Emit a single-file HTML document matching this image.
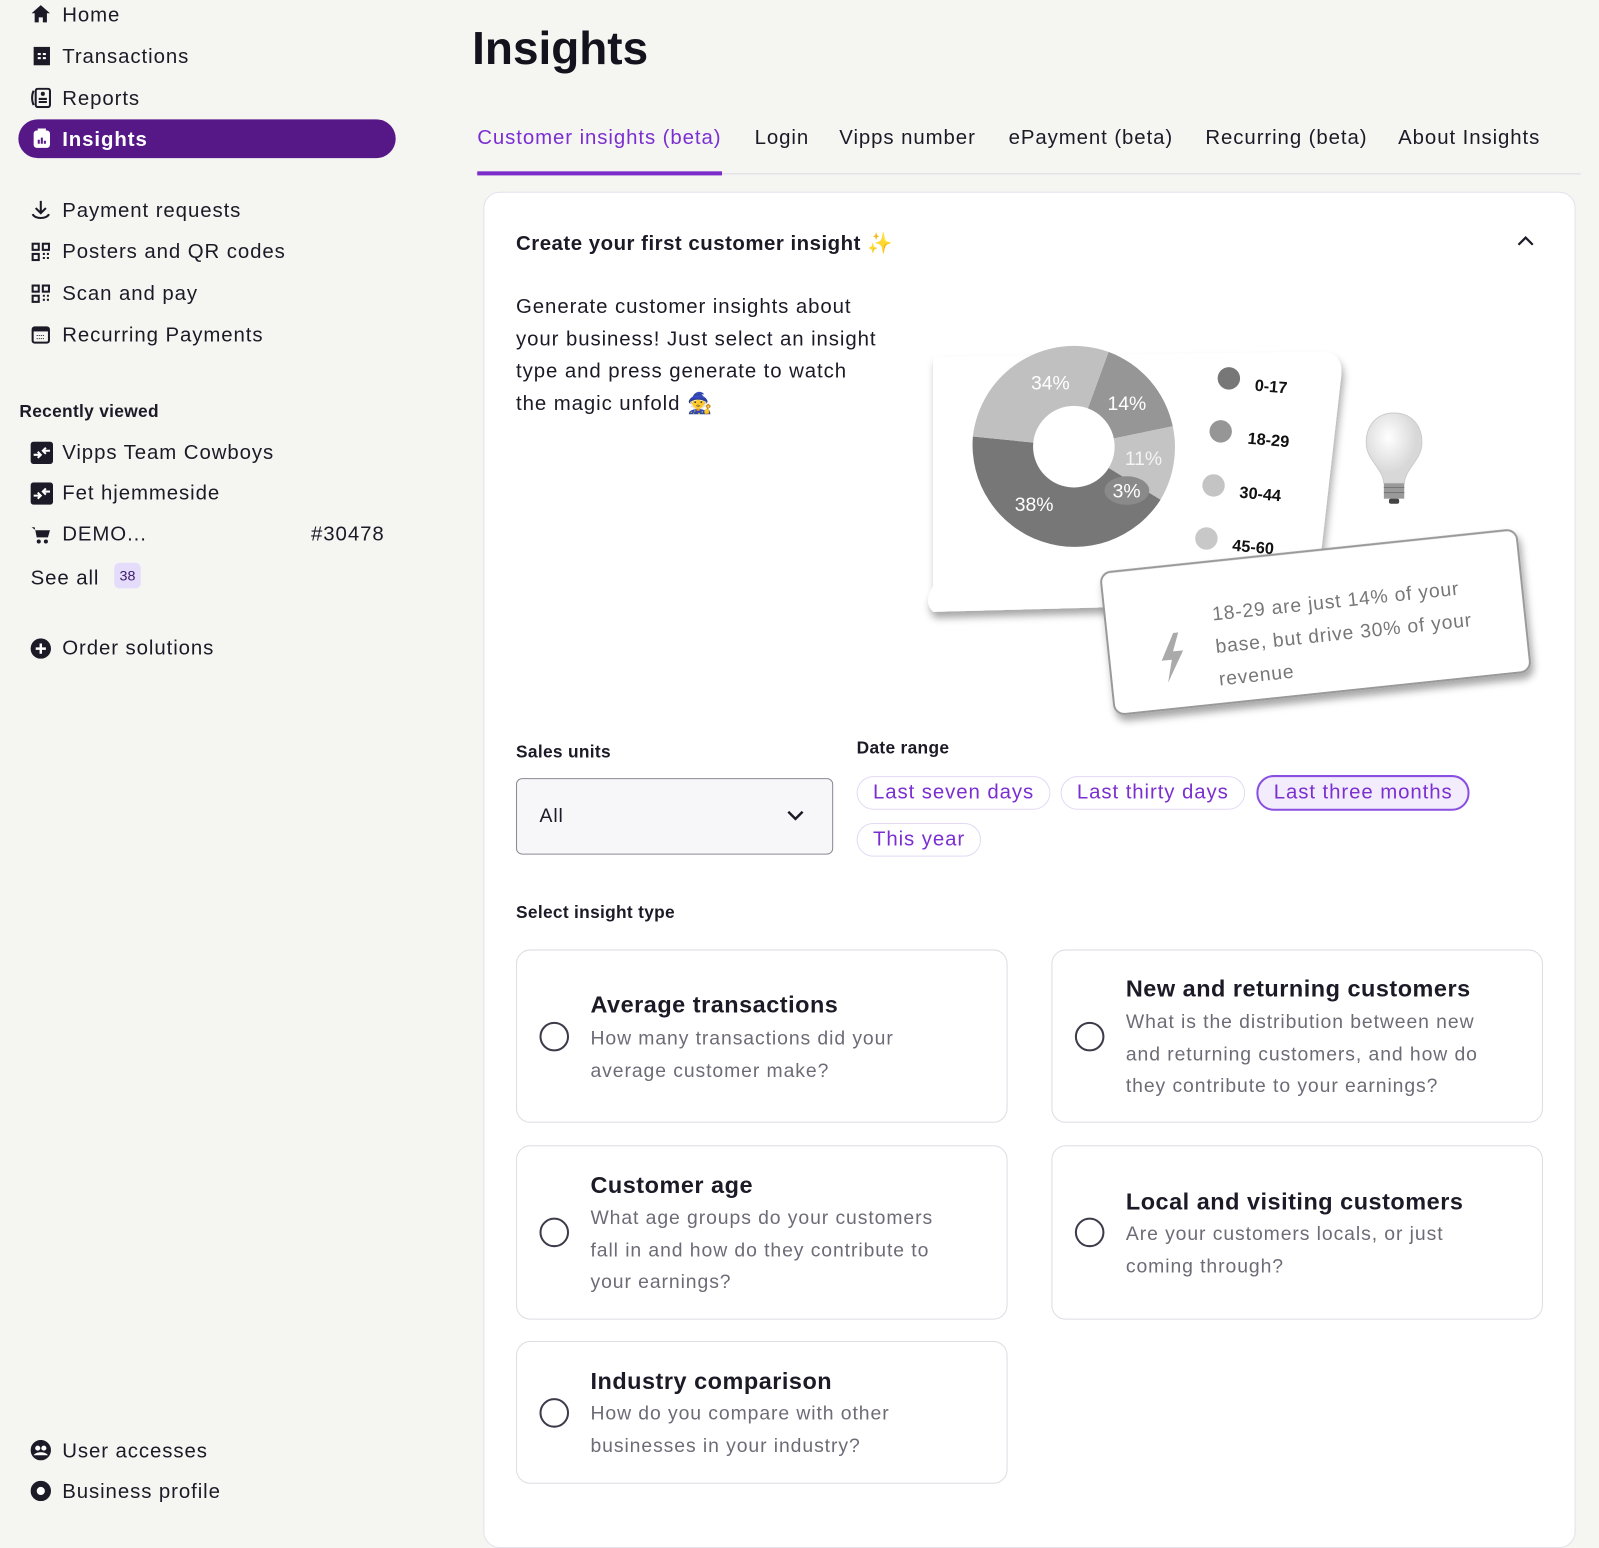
<!DOCTYPE html>
<html><head><meta charset="utf-8">
<style>
*{box-sizing:border-box;margin:0;padding:0}
html,body{width:1599px;height:1499px;overflow:hidden}
body{background:#f5f5f2;font-family:"Liberation Sans",sans-serif;color:#1b1a26}
#w{position:absolute;left:0;top:0;width:1568px;height:1470px;transform:scale(1.0198);transform-origin:0 0;letter-spacing:0.9px}
.a{position:absolute;white-space:nowrap}
.nav{font-size:20px;line-height:24px}
.ic{position:absolute;width:20px;height:20px}
.pill{position:absolute;left:18px;top:117px;width:370px;height:38px;border-radius:19px;background:#561787}
.tab{font-size:20px;top:124px}
.card{position:absolute;left:474px;top:188px;width:1071px;height:1330px;background:#fff;border:1px solid #e4e2ea;border-radius:16px}
.chip{position:absolute;height:33px;border:1px solid #e3d9f5;border-radius:17px;color:#7b2fd0;font-size:20px;line-height:31px;padding:0 15px}
.opt{position:absolute;width:482px;border:1px solid #dedde3;border-radius:14px;background:#fff}
.radio{position:absolute;left:22px;width:29px;height:29px;border:2px solid #3d3b4a;border-radius:50%}
.ot{position:absolute;left:72px;font-size:23px;font-weight:bold;color:#1b1a26;letter-spacing:0.5px}
.od{position:absolute;left:72px;font-size:19px;line-height:31.5px;color:#6d6b76;white-space:normal}
</style></head><body><div id="w">
<svg class="ic" style="left:30px;top:4px" viewBox="0 0 20 20"><path d="M10 1L1 9h3v9h4v-5h4v5h4V9h3z" fill="#1b1a26"/></svg>
<div class="a nav" style="left:61px;top:3px">Home</div>
<svg class="ic" style="left:32px;top:45px" viewBox="0 0 20 20"><rect x="1" y="1" width="16" height="18" fill="#1b1a26"/><rect x="5" y="7" width="3" height="2" fill="#fff"/><rect x="10" y="7" width="3" height="2" fill="#fff"/><rect x="5" y="11" width="3" height="2" fill="#fff"/><rect x="10" y="11" width="3" height="2" fill="#fff"/></svg>
<div class="a nav" style="left:61px;top:44px">Transactions</div>
<svg class="ic" style="left:30px;top:86px" viewBox="0 0 20 20"><rect x="5" y="1" width="14" height="18" rx="2" fill="none" stroke="#1b1a26" stroke-width="2"/><path d="M3 3C1 7 1 13 3 17" fill="none" stroke="#1b1a26" stroke-width="2"/><circle cx="12" cy="6" r="2" fill="#1b1a26"/><path d="M8 11h8M8 14h8" stroke="#1b1a26" stroke-width="2"/></svg>
<div class="a nav" style="left:61px;top:85px">Reports</div>
<div class="pill"></div>
<svg class="ic" style="left:31px;top:126px" viewBox="0 0 20 20"><rect x="2" y="2" width="16" height="17" rx="3" fill="#fff"/><rect x="6" y="0" width="8" height="4" fill="#fff"/><path d="M7 15v-4M10 15v-6M13 15v-3" stroke="#561787" stroke-width="2"/></svg>
<div class="a nav" style="left:61px;top:125px;color:#fff;font-weight:bold">Insights</div>
<svg class="ic" style="left:30px;top:196px" viewBox="0 0 20 20"><path d="M10 1v12M5 8l5 5 5-5M2 14c2 5 14 5 16 0" fill="none" stroke="#1b1a26" stroke-width="2"/></svg>
<div class="a nav" style="left:61px;top:195px">Payment requests</div>
<svg class="ic" style="left:30px;top:237px" viewBox="0 0 20 20"><rect x="2" y="2" width="6" height="6" fill="none" stroke="#1b1a26" stroke-width="2"/><rect x="12" y="2" width="6" height="6" fill="none" stroke="#1b1a26" stroke-width="2"/><rect x="2" y="12" width="6" height="6" fill="none" stroke="#1b1a26" stroke-width="2"/><path d="M12 12h2M16 12h2M12 16h2M16 16h2" stroke="#1b1a26" stroke-width="2"/></svg>
<div class="a nav" style="left:61px;top:235px">Posters and QR codes</div>
<svg class="ic" style="left:30px;top:278px" viewBox="0 0 20 20"><rect x="2" y="2" width="6" height="6" fill="none" stroke="#1b1a26" stroke-width="2"/><rect x="12" y="2" width="6" height="6" fill="none" stroke="#1b1a26" stroke-width="2"/><rect x="2" y="12" width="6" height="6" fill="none" stroke="#1b1a26" stroke-width="2"/><path d="M12 12h2M16 12h2M12 16h2M16 16h2" stroke="#1b1a26" stroke-width="2"/></svg>
<div class="a nav" style="left:61px;top:276px">Scan and pay</div>
<svg class="ic" style="left:30px;top:318px" viewBox="0 0 20 20"><rect x="2" y="3" width="16" height="15" rx="2" fill="none" stroke="#1b1a26" stroke-width="2"/><rect x="2" y="3" width="16" height="4" fill="#1b1a26"/><path d="M6 11h8M6 14h8" stroke="#1b1a26" stroke-width="1" stroke-dasharray="1 1"/></svg>
<div class="a nav" style="left:61px;top:317px">Recurring Payments</div>
<div class="a" style="left:19px;top:394px;font-size:17px;font-weight:bold;letter-spacing:0.3px">Recently viewed</div>
<svg class="ic" style="left:30px;top:433px;width:22px;height:22px" viewBox="0 0 22 22"><rect width="22" height="22" rx="3" fill="#1b1a26"/><path d="M3 13h6M7 10l3 3-3 3M19 9h-6M15 6l-3 3 3 3" fill="none" stroke="#fff" stroke-width="2"/></svg>
<div class="a nav" style="left:61px;top:432px">Vipps Team Cowboys</div>
<svg class="ic" style="left:30px;top:473px;width:22px;height:22px" viewBox="0 0 22 22"><rect width="22" height="22" rx="3" fill="#1b1a26"/><path d="M3 13h6M7 10l3 3-3 3M19 9h-6M15 6l-3 3 3 3" fill="none" stroke="#fff" stroke-width="2"/></svg>
<div class="a nav" style="left:61px;top:472px">Fet hjemmeside</div>
<svg class="ic" style="left:30px;top:515px" viewBox="0 0 20 20"><path d="M1 2h3l2 10h11l2-7H5" fill="#1b1a26"/><circle cx="8" cy="16" r="2" fill="#1b1a26"/><circle cx="15" cy="16" r="2" fill="#1b1a26"/></svg>
<div class="a nav" style="left:61px;top:512px">DEMO...</div>
<div class="a nav" style="left:305px;top:512px">#30478</div>
<div class="a nav" style="left:30px;top:555px">See all</div>
<div class="a" style="left:112px;top:552px;width:26px;height:25px;background:#e5dcfb;border-radius:5px;font-size:14px;line-height:25px;text-align:center;color:#3b1a6b;letter-spacing:0">38</div>
<svg class="ic" style="left:30px;top:626px" viewBox="0 0 20 20"><circle cx="10" cy="10" r="10" fill="#1b1a26"/><path d="M10 5v10M5 10h10" stroke="#fff" stroke-width="2.4"/></svg>
<div class="a nav" style="left:61px;top:624px">Order solutions</div>
<svg class="ic" style="left:30px;top:1412px" viewBox="0 0 20 20"><circle cx="10" cy="10" r="10" fill="#1b1a26"/><circle cx="7" cy="8" r="2.5" fill="#fff"/><circle cx="13" cy="8" r="2.5" fill="#fff"/><path d="M3 15c2-4 12-4 14 0" fill="#fff"/></svg>
<div class="a nav" style="left:61px;top:1411px">User accesses</div>
<svg class="ic" style="left:30px;top:1452px" viewBox="0 0 20 20"><circle cx="10" cy="10" r="10" fill="#1b1a26"/><circle cx="10" cy="10" r="4" fill="#fff"/></svg>
<div class="a nav" style="left:61px;top:1451px">Business profile</div>

<div class="a" style="left:463px;top:22px;font-size:45px;font-weight:bold;color:#14121c;letter-spacing:0">Insights</div>
<div class="a tab" style="left:468px;color:#7b2fd0">Customer insights (beta)</div>
<div class="a tab" style="left:740px">Login</div>
<div class="a tab" style="left:823px">Vipps number</div>
<div class="a tab" style="left:989px">ePayment (beta)</div>
<div class="a tab" style="left:1182px">Recurring (beta)</div>
<div class="a tab" style="left:1371px">About Insights</div>
<div class="a" style="left:467px;top:170px;width:1083px;height:1px;background:#dcd9e3"></div>
<div class="a" style="left:468px;top:168px;width:240px;height:4px;background:#7b2cc9"></div>

<div class="card"></div>
<div class="a" style="left:506px;top:226px;font-size:20px;font-weight:bold;letter-spacing:0.5px">Create your first customer insight <span style="color:#f5a623">✨</span></div>
<svg class="a" style="left:1486px;top:226px" width="20" height="20" viewBox="0 0 20 20"><path d="M3 14l7-7 7 7" fill="none" stroke="#1b1a26" stroke-width="2.2"/></svg>
<div class="a" style="left:506px;top:286px;font-size:20px;line-height:31.5px;white-space:normal;width:360px">Generate customer insights about your business! Just select an insight type and press generate to watch the magic unfold 🧙</div>

<svg class="a" style="left:900px;top:330px;letter-spacing:0" width="620" height="400" viewBox="900 330 620 400">
<defs><filter id="sh" x="-20%" y="-20%" width="140%" height="150%"><feDropShadow dx="2" dy="6" stdDeviation="4" flood-color="#000" flood-opacity="0.35"/></filter>
<radialGradient id="bg" cx="0.4" cy="0.35"><stop offset="0" stop-color="#fff"/><stop offset="1" stop-color="#d8d8d8"/></radialGradient></defs>
<path d="M915 350 L1300 345 Q1318 348 1315 370 L1290 590 L915 600 Q905 590 915 575Z" fill="#fff" filter="url(#sh)"/>
<g transform="translate(1053,438)">
<path d="M0 0 L34 -93 A100 100 0 0 1 97 -20Z" fill="#969696"/>
<path d="M0 0 L97 -20 A100 100 0 0 1 85 52Z" fill="#c4c4c4"/>
<path d="M0 0 L85 52 A100 100 0 0 1 -99 -10Z" fill="#777"/>
<path d="M0 0 L-99 -10 A100 100 0 0 1 34 -93Z" fill="#c0c0c0"/>
<circle r="40" fill="#fff"/>
<ellipse cx="52" cy="43" rx="22" ry="14" fill="#8a8a8a"/>
<g fill="#fff" font-family="Liberation Sans" font-size="19">
<text x="-42" y="-56">34%</text><text x="33" y="-36">14%</text><text x="50" y="18" fill="#f4f4f4">11%</text><text x="38" y="50">3%</text><text x="-58" y="63">38%</text></g>
</g>
<g font-family="Liberation Sans" font-size="16" font-weight="bold" fill="#111">
<circle cx="1205" cy="371" r="11" fill="#777"/><text x="1230" y="383" transform="rotate(5 1230 383)">0-17</text>
<circle cx="1197" cy="423" r="11" fill="#969696"/><text x="1223" y="435" transform="rotate(5 1223 435)">18-29</text>
<circle cx="1190" cy="476" r="11" fill="#c4c4c4"/><text x="1215" y="488" transform="rotate(5 1215 488)">30-44</text>
<circle cx="1183" cy="528" r="11" fill="#c8c8c8"/><text x="1208" y="540" transform="rotate(5 1208 540)">45-60</text>
</g>
<path d="M1367 405 C1348 405 1338 420 1340 438 C1342 452 1356 460 1357 474 L1377 474 C1378 460 1392 452 1394 438 C1396 420 1386 405 1367 405Z" fill="url(#bg)" stroke="#ccc"/>
<rect x="1357" y="474" width="20" height="15" fill="#9a9a9a"/>
<path d="M1357 478h20M1357 483h20" stroke="#777"/>
<rect x="1362" y="489" width="10" height="5" rx="2" fill="#444"/>
<g transform="rotate(-6 1290 610)">
<rect x="1085" y="540" width="410" height="140" rx="10" fill="#fff" stroke="#999" stroke-width="2" filter="url(#sh)"/>
<path d="M1150 606 l-14 26 h10 l-6 22 l18 -30 h-10 l7 -18z" fill="#aaa"/>
<g font-family="Liberation Sans" font-size="19" fill="#777" letter-spacing="0.8"><text x="1190" y="598">18-29 are just 14% of your</text><text x="1190" y="630">base, but drive 30% of your</text><text x="1190" y="662">revenue</text></g>
</g>
</svg>

<div class="a" style="left:506px;top:728px;font-size:17px;font-weight:bold;letter-spacing:0.3px">Sales units</div>
<div class="a" style="left:506px;top:763px;width:311px;height:75px;border:1px solid #8a8894;border-radius:6px;background:#f7f7f9"></div>
<div class="a" style="left:529px;top:790px;font-size:19px">All</div>
<svg class="a" style="left:770px;top:792px" width="20" height="16" viewBox="0 0 20 16"><path d="M3 4l7 7 7-7" fill="none" stroke="#1b1a26" stroke-width="2.4"/></svg>
<div class="a" style="left:840px;top:724px;font-size:17px;font-weight:bold;letter-spacing:0.3px">Date range</div>
<div class="chip" style="left:840px;top:761px">Last seven days</div>
<div class="chip" style="left:1040px;top:761px">Last thirty days</div>
<div class="chip" style="left:1232px;top:760px;height:35px;border:2px solid #8a4fe0;background:#f2ecfd">Last three months</div>
<div class="chip" style="left:840px;top:807px">This year</div>

<div class="a" style="left:506px;top:885px;font-size:17px;font-weight:bold;letter-spacing:0.3px">Select insight type</div>

<div class="opt" style="left:506px;top:931px;height:170px"><div class="radio" style="top:70px"></div><div class="ot" style="top:40px">Average transactions</div><div class="od" style="top:71px;width:345px">How many transactions did your average customer make?</div></div>
<div class="opt" style="left:1031px;top:931px;height:170px"><div class="radio" style="top:70px"></div><div class="ot" style="top:24px">New and returning customers</div><div class="od" style="top:55px;width:378px">What is the distribution between new and returning customers, and how do they contribute to your earnings?</div></div>
<div class="opt" style="left:506px;top:1123px;height:171px"><div class="radio" style="top:70px"></div><div class="ot" style="top:25px">Customer age</div><div class="od" style="top:55px;width:362px">What age groups do your customers fall in and how do they contribute to your earnings?</div></div>
<div class="opt" style="left:1031px;top:1123px;height:171px"><div class="radio" style="top:70px"></div><div class="ot" style="top:41px">Local and visiting customers</div><div class="od" style="top:71px;width:380px">Are your customers locals, or just coming through?</div></div>
<div class="opt" style="left:506px;top:1315px;height:140px"><div class="radio" style="top:55px"></div><div class="ot" style="top:25px">Industry comparison</div><div class="od" style="top:55px;width:380px">How do you compare with other businesses in your industry?</div></div>
</div></body></html>
